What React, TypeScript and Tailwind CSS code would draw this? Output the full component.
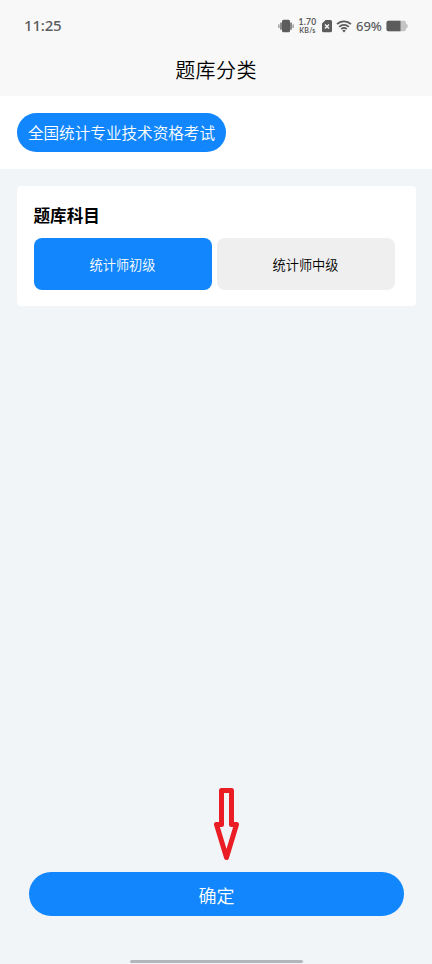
const subjects = ['统计师初级', '统计师中级']

function VibrateIcon() {
  return (
    <svg width="16" height="14" viewBox="0 0 16 14" fill="#5c5c5c">
      <rect x="4" y="0.8" width="8" height="12.4" rx="1.5" />
      <rect x="2" y="3.4" width="2" height="7.4" rx="0.5" fill="#8a8a8a" />
      <rect x="12" y="3.4" width="2" height="7.4" rx="0.5" fill="#8a8a8a" />
      <rect x="0.3" y="5.2" width="1.2" height="3.8" rx="0.6" fill="#8a8a8a" />
      <rect x="14.5" y="5.2" width="1.2" height="3.8" rx="0.6" fill="#8a8a8a" />
    </svg>
  )
}

function SimIcon() {
  return (
    <svg width="10" height="13" viewBox="0 0 10 13">
      <path d="M3.6 0H8.5A1.5 1.5 0 0 1 10 1.5V10.8A1.5 1.5 0 0 1 8.5 12.3H1.5A1.5 1.5 0 0 1 0 10.8V3.5Z" fill="#5c5c5c" />
      <path d="M3 4.4L7 8.4M7 4.4L3 8.4" stroke="#f8f8f8" strokeWidth="1.4" />
    </svg>
  )
}

function WifiIcon() {
  return (
    <svg width="16" height="13" viewBox="0 0 16 13" fill="none" stroke="#5c5c5c" strokeWidth="1.7">
      <path d="M1 4.2A10 10 0 0 1 15 4.2" />
      <path d="M3.2 6.8A6.8 6.8 0 0 1 12.8 6.8" />
      <path d="M5.3 9.1A3.8 3.8 0 0 1 10.7 9.1" />
      <path d="M6.2 10.5Q8 9.2 9.8 10.5L8 12.6Z" fill="#5c5c5c" stroke="none" />
    </svg>
  )
}

function BatteryIcon() {
  return (
    <svg width="22" height="12" viewBox="0 0 22 12">
      <rect x="0.5" y="0.7" width="19.5" height="10.6" rx="1.8" fill="#c4c4c4" />
      <path d="M2.3 0.7H14.5V11.3H2.3A1.8 1.8 0 0 1 0.5 9.5V2.5A1.8 1.8 0 0 1 2.3 0.7Z" fill="#5c5c5c" />
      <path d="M20 3.4Q21.8 4 21.8 6T20 8.6Z" fill="#c4c4c4" />
    </svg>
  )
}

function StatusBar() {
  return (
    <div className="flex h-[52px] items-center justify-between pl-6 pr-6 font-['Noto_Sans',sans-serif] text-[#5c5c5c]">
      <span className="-mt-px text-[15px] font-medium tracking-[-0.2px]">11:25</span>
      <div className="flex items-center">
        <VibrateIcon />
        <div className="ml-1 flex w-[19px] flex-col whitespace-nowrap text-center font-['Lato',sans-serif] font-bold">
          <div className="text-[8.5px] leading-[8px] tracking-[0.3px]">1.70</div>
          <div className="text-[7px] leading-[8px] tracking-[0.2px]">KB/s</div>
        </div>
        <span className="ml-[5px]"><SimIcon /></span>
        <span className="ml-1"><WifiIcon /></span>
        <span className="ml-1 mt-px w-[27px] whitespace-nowrap text-[13px] font-medium">69%</span>
        <span className="ml-[3px]"><BatteryIcon /></span>
      </div>
    </div>
  )
}

export default function App() {
  return (
    <div className="flex h-[964px] w-[432px] flex-col overflow-hidden bg-[#f1f5f8] font-['Noto_Sans_CJK_SC',sans-serif] font-[350] text-black">
      <header className="h-24 bg-[#f8f8f8]">
        <StatusBar />
        <h1 className="text-center text-[20px] font-[350] leading-[35px] tracking-[0.4px]">题库分类</h1>
      </header>

      <div className="h-[73px] bg-white px-[17px] pt-[17px]">
        <button className="block h-[39px] w-[209px] whitespace-nowrap rounded-full bg-[#1286fc] text-center text-[15.6px] leading-[39px] text-white">
          全国统计专业技术资格考试
        </button>
      </div>

      <section className="ml-[17px] mt-[17px] h-[120px] w-[399px] rounded bg-white px-[16.5px] pt-[17px]">
        <h2 className="text-[16.6px] font-bold leading-6">题库科目</h2>
        <div className="mt-[11px] flex gap-[5px]">
          {subjects.map((name, i) => (
            <button
              key={name}
              className={`h-[51.5px] w-[178px] rounded-lg pt-[2px] text-[13.2px] ${i === 0 ? 'bg-[#1286fc] text-white' : 'bg-[#efefef]'}`}
            >
              {name}
            </button>
          ))}
        </div>
      </section>

      <div className="mt-auto flex flex-col items-center">
        <svg className="ml-5" width="28" height="76" viewBox="0 0 28 76" fill="none" stroke="#ea1c24" strokeWidth="5" strokeLinejoin="round">
          <path d="M9.5 2.5H19.5V36.5H24.5L14.5 69.5L4.5 36.5H9.5Z" />
        </svg>
        <button className="mt-2 ml-px h-11 w-[375px] rounded-full bg-[#1286fc] pt-[2px] text-[18px] text-white">确定</button>
        <div className="mb-px mt-11 h-[3px] w-[173px] rounded-full bg-[#b3b7bb]" />
      </div>
    </div>
  )
}
